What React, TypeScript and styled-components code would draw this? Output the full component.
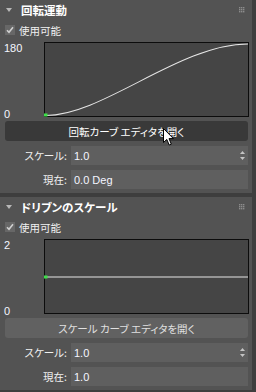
import React from "react";
import styled, { createGlobalStyle } from "styled-components";

const GlobalStyle = createGlobalStyle`
  html, body {
    margin: 0;
    padding: 0;
    background: #3e3e3e;
  }
  body {
    font-family: "Noto Sans CJK JP", "Noto Sans", sans-serif;
    font-feature-settings: "palt";
    color: #e8e8e8;
  }
`;

type Field = { label: string; value: string; spinner?: boolean };

type Section = {
  title: string;
  top: string;
  bottom: string;
  curve: "ease" | "flat";
  button: string;
  pressed?: boolean;
  fields: Field[];
};

const sections: Section[] = [
  {
    title: "回転運動",
    top: "180",
    bottom: "0",
    curve: "ease",
    button: "回転カーブ エディタを開く",
    pressed: true,
    fields: [
      { label: "スケール:", value: "1.0", spinner: true },
      { label: "現在:", value: "0.0 Deg" },
    ],
  },
  {
    title: "ドリブンのスケール",
    top: "2",
    bottom: "0",
    curve: "flat",
    button: "スケール カーブ エディタを開く",
    fields: [
      { label: "スケール:", value: "1.0", spinner: true },
      { label: "現在:", value: "1.0" },
    ],
  },
];

const Grip = () => (
  <svg width="6" height="6" viewBox="0 0 6 6">
    {[0, 2, 4].map((y) =>
      [0, 2, 4].map((x) => <rect key={`${x}-${y}`} x={x} y={y} width="1.4" height="1.4" fill="#8c8c8c" />)
    )}
  </svg>
);

const Check = () => (
  <svg width="8" height="8" viewBox="0 0 8 8">
    <path d="M1 4.2 L3 6.3 L7 1.3" stroke="#d0d0d0" strokeWidth="1.6" fill="none" />
  </svg>
);

const Spinner = () => (
  <svg width="5" height="9" viewBox="0 0 5 9">
    <path d="M2.5 0 L5 3 L0 3 Z" fill="#c4c4c4" />
    <path d="M0 6 L5 6 L2.5 9 Z" fill="#c4c4c4" />
  </svg>
);

const Cursor = () => (
  <CursorWrap width="11" height="18" viewBox="0 0 11 18">
    <path
      d="M0.5 0.5 L0.5 14.5 L3.8 11.4 L6.2 17 L8.3 16.1 L6 10.6 L10.4 10.6 Z"
      fill="#ffffff"
      stroke="#000000"
      strokeWidth="1"
      strokeLinejoin="round"
    />
  </CursorWrap>
);

const CurveGraph: React.FC<{ kind: "ease" | "flat" }> = ({ kind }) => (
  <GraphBox>
    <svg width="100%" height="100%" viewBox="0 0 203 72" preserveAspectRatio="none">
      {kind === "ease" ? (
        <>
          <path d="M1 71.5 C 58 71.5 135 1 203 1" stroke="#e6e6e6" strokeWidth="1" fill="none" />
          <rect x="-1" y="69.5" width="3.5" height="3" fill="#3ee04a" />
        </>
      ) : (
        <>
          <line x1="0" y1="36.5" x2="203" y2="36.5" stroke="#e6e6e6" strokeWidth="1" />
          <rect x="-1" y="35" width="3.5" height="3" fill="#3ee04a" />
        </>
      )}
    </svg>
  </GraphBox>
);

const RolloutPanel: React.FC<{ s: Section }> = ({ s }) => (
  <Panel>
    <Header>
      <Arrow />
      <Title>{s.title}</Title>
      <Grip />
    </Header>
    <CheckRow>
      <CheckBox>
        <Check />
      </CheckBox>
      <span>使用可能</span>
    </CheckRow>
    <GraphRow>
      <Axis>
        <AxisLabel>{s.top}</AxisLabel>
        <AxisLabel>{s.bottom}</AxisLabel>
      </Axis>
      <CurveGraph kind={s.curve} />
    </GraphRow>
    <EditorButton $pressed={s.pressed}>
      {s.button}
      {s.pressed && <Cursor />}
    </EditorButton>
    {s.fields.map((f) => (
      <FieldRow key={f.label}>
        <FieldLabel>{f.label}</FieldLabel>
        <Input>
          <span>{f.value}</span>
          {f.spinner && <Spinner />}
        </Input>
      </FieldRow>
    ))}
  </Panel>
);

export default function App() {
  return (
    <>
      <GlobalStyle />
      <Page>
        {sections.map((s) => (
          <RolloutPanel key={s.title} s={s} />
        ))}
      </Page>
    </>
  );
}

const Page = styled.div`
  width: 256px;
  height: 392px;
  box-sizing: border-box;
  padding-right: 4px;
  display: flex;
  flex-direction: column;
  gap: 4px;
  overflow: hidden;
`;

const Panel = styled.div`
  background: #535353;
  padding: 0 3px 4px 5px;
  display: flex;
  flex-direction: column;
`;

const Header = styled.div`
  height: 20px;
  display: flex;
  align-items: center;
  padding-right: 4px;
`;

const Arrow = styled.div`
  width: 0;
  height: 0;
  margin: 0 9px 0 1px;
  border-left: 3px solid transparent;
  border-right: 3px solid transparent;
  border-top: 4px solid #b8b8b8;
`;

const Title = styled.div`
  flex: 1;
  font-size: 11.5px;
  font-weight: 700;
  color: #ffffff;
  line-height: 20px;
`;

const CheckRow = styled.label`
  margin-top: 2px;
  height: 16px;
  display: flex;
  align-items: center;
  gap: 4px;
  font-size: 10.5px;
  color: #f0f0f0;
`;

const CheckBox = styled.div`
  width: 10px;
  height: 10px;
  background: #676767;
  display: flex;
  align-items: center;
  justify-content: center;
`;

const GraphRow = styled.div`
  margin-top: 4px;
  height: 75px;
  display: flex;
`;

const Axis = styled.div`
  width: 39px;
  display: flex;
  flex-direction: column;
  justify-content: space-between;
  margin-bottom: -3px;
`;

const AxisLabel = styled.div`
  font-family: "Liberation Sans", Arial, sans-serif;
  font-size: 11px;
  line-height: 12px;
  color: #f4f6ff;
  margin-left: -1px;
`;

const GraphBox = styled.div`
  flex: 1;
  border: 1px solid #0c0c0c;
  background: #454545;
  overflow: visible;
  svg {
    display: block;
    overflow: visible;
  }
`;

const EditorButton = styled.div<{ $pressed?: boolean }>`
  position: relative;
  margin: 4px 1px 0 0;
  height: 20px;
  border-radius: 3px;
  background: ${(p) => (p.$pressed ? "#393939" : "#616161")};
  color: ${(p) => (p.$pressed ? "#ffffff" : "#e0e0e0")};
  font-size: 10.5px;
  display: flex;
  align-items: center;
  justify-content: center;
`;

const CursorWrap = styled.svg`
  position: absolute;
  left: 158px;
  top: 7px;
`;

const FieldRow = styled.div`
  margin-top: 5px;
  height: 19px;
  display: flex;
  gap: 4px;
  padding-right: 1px;
`;

const FieldLabel = styled.div`
  width: 62px;
  text-align: right;
  font-size: 10.5px;
  line-height: 19px;
  color: #f0f0f0;
`;

const Input = styled.div`
  flex: 1;
  background: #5f5f5f;
  display: flex;
  align-items: center;
  justify-content: space-between;
  padding: 0 3px 0 3px;
  font-family: "Liberation Sans", Arial, sans-serif;
  font-size: 11px;
  color: #f4f6ff;
`;
